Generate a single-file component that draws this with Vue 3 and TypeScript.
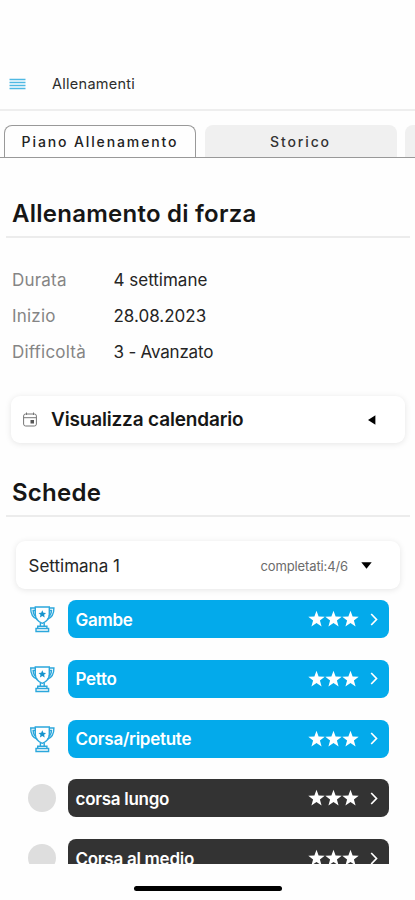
<script setup lang="ts">
interface Workout {
  name: string
  done: boolean
}

const details: { label: string; value: string; kind: string }[] = [
  { label: 'Durata', value: '4 settimane', kind: 'weeks' },
  { label: 'Inizio', value: '28.08.2023', kind: 'date' },
  { label: 'Difficoltà', value: '3 - Avanzato', kind: 'level' },
]

const workouts: Workout[] = [
  { name: 'Gambe', done: true },
  { name: 'Petto', done: true },
  { name: 'Corsa/ripetute', done: true },
  { name: 'corsa lungo', done: false },
  { name: 'Corsa al medio', done: false },
]
</script>

<template>
  <div class="screen">
    <header class="topbar">
      <svg class="menu" width="17" height="12" viewBox="0 0 17 12">
        <path d="M0.5 1.5h16M0.5 4.5h16M0.5 7.5h16M0.5 10.5h16" stroke="#4fb9e3" stroke-width="1.3" />
      </svg>
      <span class="topbar-title">Allenamenti</span>
    </header>

    <nav class="tabs">
      <div class="tab active"><span>Piano Allenamento</span></div>
      <div class="tab"><span>Storico</span></div>
      <div class="tab"></div>
    </nav>

    <main class="content">
      <h1 class="heading">Allenamento di forza</h1>

      <dl class="details">
        <div v-for="d in details" :key="d.label" class="detail">
          <dt>{{ d.label }}</dt>
          <dd :class="d.kind">{{ d.value }}</dd>
        </div>
      </dl>

      <div class="card calendar">
        <svg width="14" height="15" viewBox="0 0 14 15" fill="none" stroke="#777" stroke-width="1">
          <rect x="0.6" y="2" width="12.8" height="12" rx="2" />
          <path d="M0.6 5.7h12.8M3.5 0.5v2.5M10.5 0.5v2.5" />
          <rect x="7.5" y="8" width="3.5" height="3.5" fill="#555" stroke="none" />
        </svg>
        <span class="calendar-title">Visualizza calendario</span>
        <svg class="left" width="8" height="10" viewBox="0 0 8 10"><path d="M0 5L7.4 0.2v9.6z" /></svg>
      </div>

      <h2 class="heading second">Schede</h2>

      <div class="card week">
        <span class="week-title">Settimana 1</span>
        <span class="progress">completati:4/6</span>
        <svg width="11" height="7" viewBox="0 0 11 7"><path d="M0.3 0.3h10.4L5.5 6.8z" /></svg>
      </div>

      <ul class="workouts">
        <li v-for="w in workouts" :key="w.name" class="workout">
          <svg v-if="w.done" class="status" width="28" height="28" viewBox="0 0 28 28" fill="none" stroke="#2ba7dc" stroke-width="1.4">
            <path d="M7.3 2h14v7.5c0 4.3-3 7.2-7 8.8c-4-1.6-7-4.5-7-8.8z" />
            <path d="M7.3 3H2.7c-.1 6.2 2 9.8 6.8 11.4M21.3 3h4.6c.1 6.2-2 9.8-6.8 11.4M7.3 5.5H5.1c.2 3 1 4.8 2.8 6M21.3 5.5h2.2c-.2 3-1 4.8-2.8 6" />
            <path d="M12.4 17.5v4M16.2 17.5v4M9.7 21.3h9.2v2.2H9.7zM8 23.5h12.6v3H8z" />
            <path d="M14.3 5.2l1.1 2.5 2.7.3-2 1.8.6 2.7-2.4-1.4-2.4 1.4.6-2.7-2-1.8 2.7-.3z" fill="#1594ce" stroke="none" />
          </svg>
          <span v-else class="status pending"></span>
          <div class="bar" :class="{ done: w.done }">
            <span class="name">{{ w.name }}</span>
            <svg class="stars" width="51" height="18" viewBox="0 0 51 18" fill="#fff">
              <path v-for="n in 3" :key="n" :transform="`translate(${(n - 1) * 17} 0)`" d="M8.5 .7l2.1 5.8 6.1.2-4.8 3.8 1.7 5.9-5.1-3.4-5.1 3.4 1.7-5.9L.3 6.7l6.1-.2z" />
            </svg>
            <svg class="chevron" width="8" height="13" viewBox="0 0 8 13"><path d="M1.2 1l5.3 5.5L1.2 12" fill="none" stroke="#fff" stroke-width="1.7" /></svg>
          </div>
        </li>
      </ul>
    </main>

    <footer class="footer"><div class="home"></div></footer>
  </div>
</template>

<style>
body {
  background: #fefefe;
}
</style>

<style scoped>
.screen {
  box-sizing: border-box;
  width: 415px;
  height: 900px;
  padding-top: 58px;
  display: flex;
  flex-direction: column;
  overflow: hidden;
  background: #fefefe;
  color: #161616;
  font-family: Inter, "Liberation Sans", sans-serif;
}
.topbar {
  box-sizing: border-box;
  flex: none;
  height: 53px;
  display: flex;
  align-items: center;
  gap: 26px;
  padding-left: 9px;
  border-bottom: 2px solid #eee;
}
.topbar-title {
  font-size: 14.5px;
  letter-spacing: 0.27px;
  color: #2c2c2c;
}
.tabs {
  box-sizing: border-box;
  flex: none;
  height: 47px;
  padding: 14px 0 0 4px;
  display: flex;
  gap: 8.5px;
  border-bottom: 1px solid #999;
}
.tab {
  box-sizing: border-box;
  flex: none;
  width: 192px;
  height: 32px;
  display: flex;
  align-items: center;
  justify-content: center;
  border-radius: 8px 8px 0 0;
  background: #f0f0f0;
  color: #333;
  font-size: 14px;
  font-weight: 500;
  letter-spacing: 1.88px;
}
.tab.active {
  border: 1px solid #999;
  border-bottom: 0;
  background: #fefefe;
  color: #222;
}
.content {
  flex: none;
  height: 706px;
  overflow: hidden;
}
.heading {
  box-sizing: border-box;
  height: 50px;
  margin: 30px 5px 0 6px;
  padding-left: 6px;
  border-bottom: 2px solid #ececec;
  font-size: 24px;
  font-weight: 600;
  line-height: 52px;
  letter-spacing: 0.25px;
}
.details {
  margin: 24px 0 0 12px;
}
.detail {
  display: flex;
  height: 36px;
  align-items: center;
  font-size: 17px;
}
dt {
  width: 101.5px;
  color: #858585;
  letter-spacing: 0.2px;
}
dd {
  margin: 0;
  color: #252525;
}
.level {
  letter-spacing: -0.2px;
}
.card {
  box-sizing: border-box;
  display: flex;
  align-items: center;
  border-radius: 9px;
  background: #fff;
  box-shadow: 0 1px 6px rgba(0, 0, 0, 0.1);
}
.calendar {
  height: 47px;
  margin: 26px 10px 0 11px;
  padding: 0 29px 0 12px;
}
.calendar-title {
  margin-left: 14px;
  font-size: 19px;
  font-weight: 600;
  letter-spacing: -0.17px;
}
.left {
  margin-left: auto;
}
.heading.second {
  margin-top: 24px;
}
.week {
  height: 48px;
  margin: 24px 15px 0 16px;
  padding: 1px 28px 0 12.5px;
}
.week-title {
  font-size: 17px;
  color: #252525;
}
.progress {
  margin: 0 13px 0 auto;
  font-size: 13px;
  letter-spacing: -0.12px;
  color: #6b6b6b;
}
.workouts {
  margin: 11px 0 0;
  padding: 0 26px 0 28px;
  list-style: none;
  display: flex;
  flex-direction: column;
  gap: 21.8px;
}
.workout {
  display: flex;
  align-items: center;
  gap: 11.5px;
}
.status {
  flex: none;
  width: 28px;
  height: 28px;
}
.pending {
  border-radius: 50%;
  background: #dedede;
}
.bar {
  box-sizing: border-box;
  flex: 1;
  height: 38px;
  padding: 0 11px 0 8px;
  display: flex;
  align-items: center;
  border-radius: 8px;
  background: #333;
  color: #fff;
}
.bar.done {
  background: #03aaeb;
}
.name {
  padding-top: 1px;
  font-size: 17px;
  font-weight: 600;
  letter-spacing: -0.27px;
}
.stars {
  margin-left: auto;
}
.chevron {
  margin-left: 11px;
}
.footer {
  flex: 1;
  display: flex;
  justify-content: center;
  align-items: flex-start;
  padding-top: 22px;
}
.home {
  width: 148px;
  height: 5px;
  border-radius: 3px;
  background: #000;
}
</style>
